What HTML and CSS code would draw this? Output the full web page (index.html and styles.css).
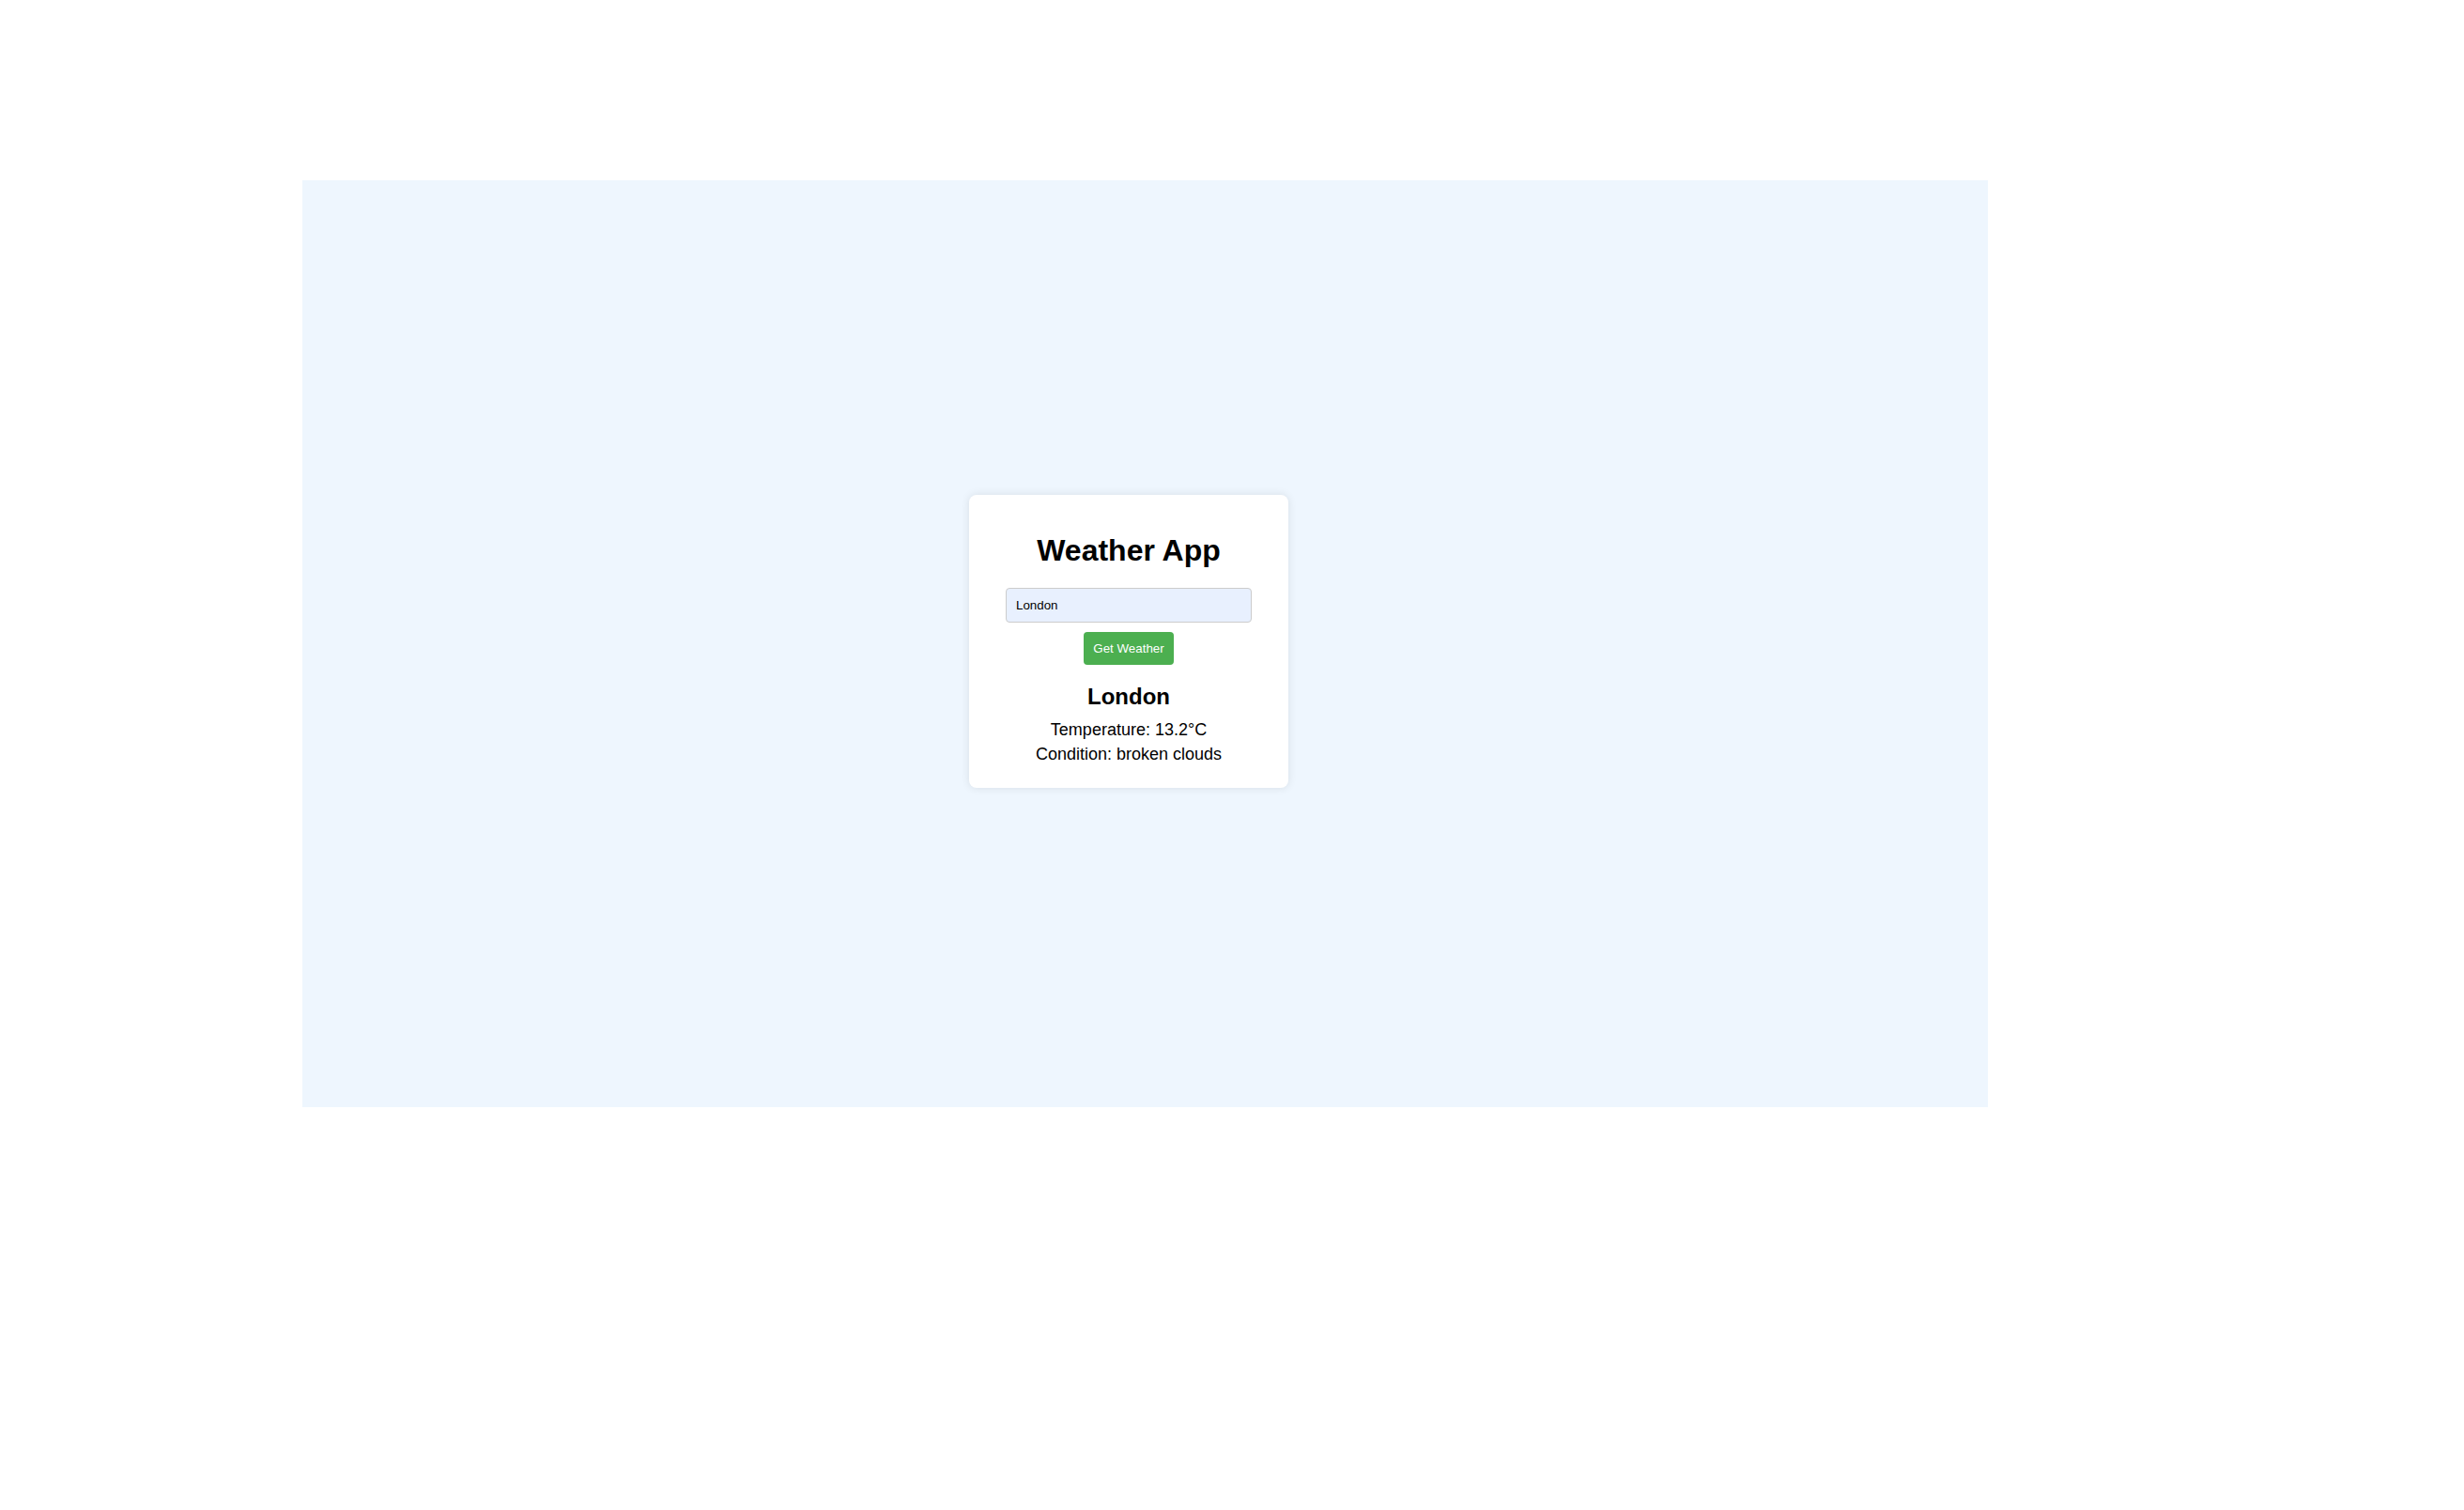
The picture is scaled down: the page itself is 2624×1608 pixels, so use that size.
FILE: index.html
```html
<!DOCTYPE html>
<html lang="en">
<head>
<meta charset="UTF-8">
<title>Weather App</title>
<link rel="stylesheet" href="styles.css">
</head>
<body>
<div class="page">
  <div class="card">
    <h1 class="title">Weather App</h1>
    <input class="city-input" type="text" value="London">
    <button class="get-btn">Get Weather</button>
    <div class="result">
      <h2 class="city">London</h2>
      <p class="line">Temperature: 13.2°C</p>
      <p class="line">Condition: broken clouds</p>
    </div>
  </div>
</div>
</body>
</html>
```

FILE: styles.css
```css
html, body {
  margin: 0;
  padding: 0;
  background: #ffffff;
}
body {
  font-family: "Liberation Sans", Arial, sans-serif;
  color: #000;
  padding: 192px 0 0 322px;
}
.page {
  width: 1795px;
  height: 987px;
  box-sizing: border-box;
  background: #eef6fe;
  display: flex;
  align-items: flex-start;
  padding: 335px 0 0 710px;
}
.card {
  width: 340px;
  box-sizing: border-box;
  background: #fff;
  border-radius: 8px;
  box-shadow: 0 0 10px rgba(0, 0, 0, 0.1);
  padding: 20px 20px 20px;
  display: flex;
  flex-direction: column;
  align-items: center;
  text-align: center;
}
.title {
  font-size: 32px;
  font-weight: bold;
  margin: 21px 0 21px;
  line-height: 37px;
}
.city-input {
  width: 262px;
  height: 37px;
  box-sizing: border-box;
  padding: 0 10px;
  border: 1px solid #cccccc;
  border-radius: 4px;
  background: #e8f0fe;
  font-family: "Liberation Sans", Arial, sans-serif;
  font-size: 13.333px;
  color: #000;
  margin: 0;
  outline: none;
}
.get-btn {
  margin-top: 10px;
  height: 35px;
  padding: 0 10px;
  border: none;
  border-radius: 4px;
  background: #4caf50;
  color: #fff;
  font-family: "Liberation Sans", Arial, sans-serif;
  font-size: 13.333px;
  cursor: pointer;
}
.result {
  margin-top: 20px;
}
.city {
  font-size: 24px;
  font-weight: bold;
  margin: 0 0 11px;
  line-height: 27.6px;
}
.line {
  font-size: 18px;
  margin: 0 0 5.5px;
  line-height: 20.7px;
}
```
